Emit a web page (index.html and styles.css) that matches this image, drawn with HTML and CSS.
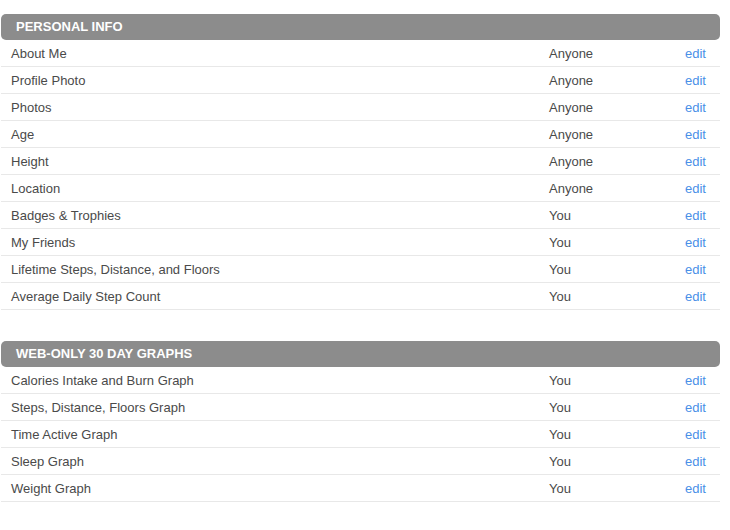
FILE: index.html
```html
<!DOCTYPE html>
<html>
<head>
<meta charset="utf-8">
<link rel="stylesheet" href="styles.css">
</head>
<body>
<div class="page">
  <section class="section">
    <div class="section-head">PERSONAL INFO</div>
    <div class="row"><span class="name">About Me</span><span class="who">Anyone</span><a class="edit">edit</a></div>
    <div class="row"><span class="name">Profile Photo</span><span class="who">Anyone</span><a class="edit">edit</a></div>
    <div class="row"><span class="name">Photos</span><span class="who">Anyone</span><a class="edit">edit</a></div>
    <div class="row"><span class="name">Age</span><span class="who">Anyone</span><a class="edit">edit</a></div>
    <div class="row"><span class="name">Height</span><span class="who">Anyone</span><a class="edit">edit</a></div>
    <div class="row"><span class="name">Location</span><span class="who">Anyone</span><a class="edit">edit</a></div>
    <div class="row"><span class="name">Badges &amp; Trophies</span><span class="who">You</span><a class="edit">edit</a></div>
    <div class="row"><span class="name">My Friends</span><span class="who">You</span><a class="edit">edit</a></div>
    <div class="row"><span class="name">Lifetime Steps, Distance, and Floors</span><span class="who">You</span><a class="edit">edit</a></div>
    <div class="row"><span class="name">Average Daily Step Count</span><span class="who">You</span><a class="edit">edit</a></div>
  </section>
  <section class="section">
    <div class="section-head">WEB-ONLY 30 DAY GRAPHS</div>
    <div class="row"><span class="name">Calories Intake and Burn Graph</span><span class="who">You</span><a class="edit">edit</a></div>
    <div class="row"><span class="name">Steps, Distance, Floors Graph</span><span class="who">You</span><a class="edit">edit</a></div>
    <div class="row"><span class="name">Time Active Graph</span><span class="who">You</span><a class="edit">edit</a></div>
    <div class="row"><span class="name">Sleep Graph</span><span class="who">You</span><a class="edit">edit</a></div>
    <div class="row"><span class="name">Weight Graph</span><span class="who">You</span><a class="edit">edit</a></div>
  </section>
</div>
</body>
</html>
```

FILE: styles.css
```css
html, body {
  margin: 0;
  padding: 0;
  background: #ffffff;
}
.page {
  padding: 14px 0 0 1px;
  width: 719px;
  font-family: "Liberation Sans", Arial, sans-serif;
  font-size: 13px;
  color: #4a4a4a;
}
.section + .section {
  margin-top: 31px;
}
.section-head {
  height: 26px;
  line-height: 26px;
  background: #8c8c8c;
  color: #ffffff;
  font-weight: bold;
  font-size: 13px;
  padding-left: 15px;
  border-radius: 5px;
}
.row {
  display: grid;
  grid-template-columns: 548px 136px 1fr;
  box-sizing: border-box;
  height: 27px;
  padding-top: 1px;
  line-height: 25px;
  border-bottom: 1px solid #e8e8e8;
}
.name {
  padding-left: 10px;
}
.edit {
  color: #4a8fe7;
  cursor: pointer;
}
```
